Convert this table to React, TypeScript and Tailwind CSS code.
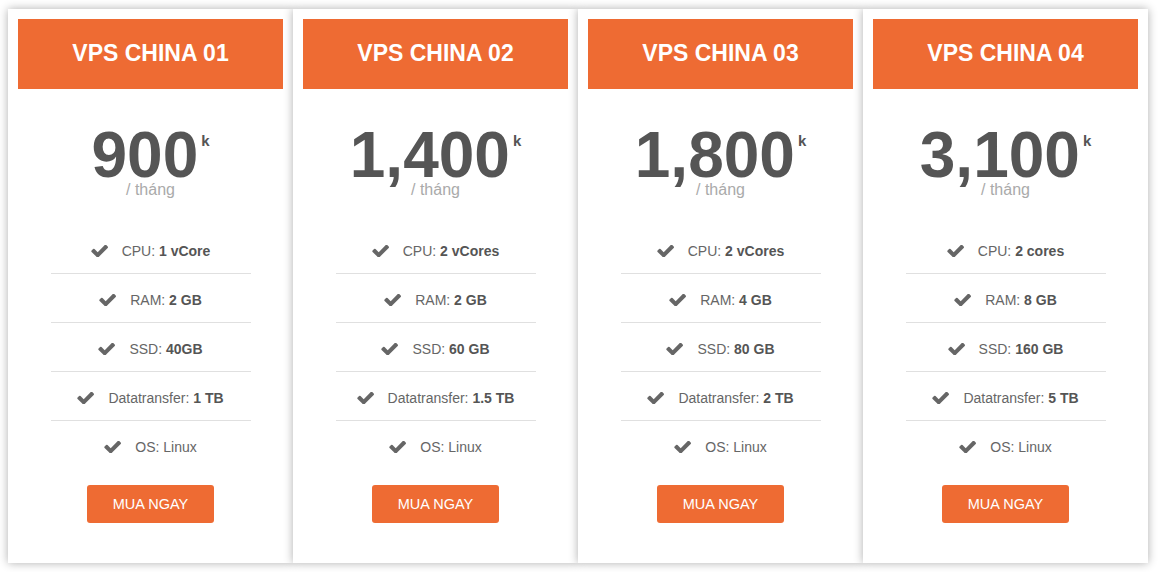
const plans = [
  {
    name: "VPS CHINA 01",
    price: "900",
    specs: [
      { label: "CPU:", value: "1 vCore" },
      { label: "RAM:", value: "2 GB" },
      { label: "SSD:", value: "40GB" },
      { label: "Datatransfer:", value: "1 TB" },
    ],
  },
  {
    name: "VPS CHINA 02",
    price: "1,400",
    specs: [
      { label: "CPU:", value: "2 vCores" },
      { label: "RAM:", value: "2 GB" },
      { label: "SSD:", value: "60 GB" },
      { label: "Datatransfer:", value: "1.5 TB" },
    ],
  },
  {
    name: "VPS CHINA 03",
    price: "1,800",
    specs: [
      { label: "CPU:", value: "2 vCores" },
      { label: "RAM:", value: "4 GB" },
      { label: "SSD:", value: "80 GB" },
      { label: "Datatransfer:", value: "2 TB" },
    ],
  },
  {
    name: "VPS CHINA 04",
    price: "3,100",
    specs: [
      { label: "CPU:", value: "2 cores" },
      { label: "RAM:", value: "8 GB" },
      { label: "SSD:", value: "160 GB" },
      { label: "Datatransfer:", value: "5 TB" },
    ],
  },
];

function Check() {
  return (
    <svg width="17" height="12" viewBox="93 362 1578 1092" fill="#666666" className="shrink-0">
      <path d="M1671 566q0 40-28 68l-724 724-136 136q-28 28-68 28t-68-28l-136-136-362-362q-28-28-28-68t28-68l136-136q28-28 68-28t68 28l294 295 656-657q28-28 68-28t68 28l136 136q28 28 28 68z" />
    </svg>
  );
}

function Row({ children, last }: { children: React.ReactNode; last?: boolean }) {
  return (
    <li
      className={`flex items-center justify-center gap-[14px] pt-[16px] pb-[12px] text-[14px] leading-[20px] text-[#666] ${
        last ? "" : "border-b border-[#e0e0e0]"
      }`}
    >
      <Check />
      <span>{children}</span>
    </li>
  );
}

export default function App() {
  return (
    <div
      className="min-h-[572px] bg-white pl-[8px] pt-[9px]"
      style={{ fontFamily: '"Liberation Sans", Arial, sans-serif' }}
    >
      <div className="flex">
        {plans.map((plan) => (
          <div
            key={plan.name}
            className="w-[285px] h-[554px] bg-white p-[10px] flex flex-col items-center shadow-[0_0_9px_rgba(0,0,0,0.32)]"
          >
            {/* Header */}
            <div className="w-full h-[70px] bg-[#ee6b33] flex items-center justify-center">
              <h2 className="text-white font-bold text-[23px] -mt-[1px]">{plan.name}</h2>
            </div>

            {/* Price */}
            <div className="mt-[41px] flex flex-col items-center">
              <div className="flex items-start text-[#555]">
                <span className="text-[64px] font-bold leading-[50px]">{plan.price}</span>
                <span className="text-[15px] font-bold leading-none mt-[3px] ml-[3px]">k</span>
              </div>
              <span className="mt-[2px] text-[16px] leading-[16px] text-[#aaa]">/ tháng</span>
            </div>

            {/* Specs */}
            <ul className="mt-[27px] w-[200px]">
              {plan.specs.map((s) => (
                <Row key={s.label}>
                  {s.label} <b className="text-[#555]">{s.value}</b>
                </Row>
              ))}
              <Row last>OS: Linux</Row>
            </ul>

            <button className="mt-[16px] w-[127px] h-[38px] pt-[2px] rounded-[3px] bg-[#ee6b33] text-white text-[14.5px]">
              MUA NGAY
            </button>
          </div>
        ))}
      </div>
    </div>
  );
}
